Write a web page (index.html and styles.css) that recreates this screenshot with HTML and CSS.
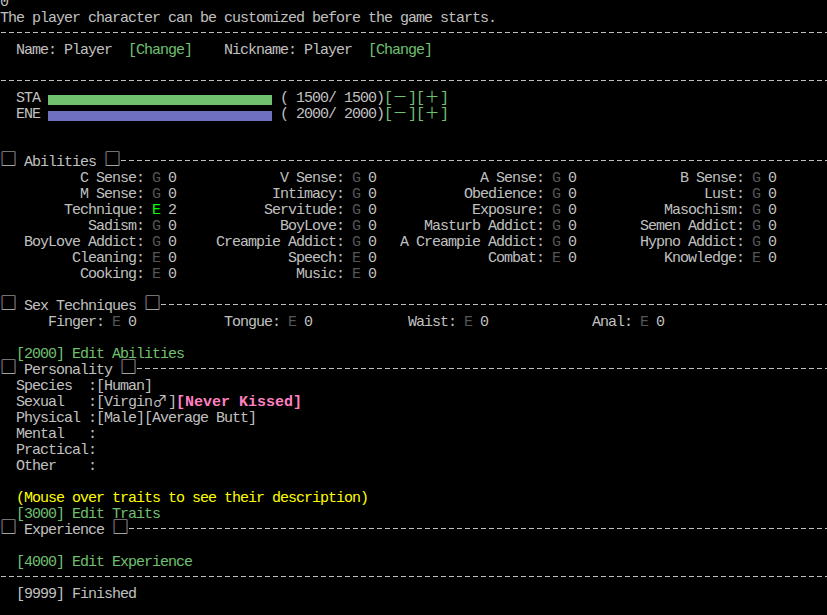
FILE: index.html
```html
<!DOCTYPE html>
<html lang="en">
<head>
    <meta charset="UTF-8">
    <title>Character Setup</title>
    <link rel="stylesheet" href="styles.css">
</head>
<body>
    <div class="console">
        <div class="ln">0</div>
        <div class="ln">The player character can be customized before the game starts.</div>
        <div class="rule"></div>
        <div class="ln">  Name: Player  <span class="link">[Change]</span>    Nickname: Player  <span class="link">[Change]</span></div>
        <div class="ln"></div>
        <div class="rule"></div>
        <div class="ln">  STA <span class="bar sta"></span> ( 1500/ 1500)<span class="link">[<span class="fw">－</span>][<span class="fw">＋</span>]</span></div>
        <div class="ln">  ENE <span class="bar ene"></span> ( 2000/ 2000)<span class="link">[<span class="fw">－</span>][<span class="fw">＋</span>]</span></div>
        <div class="ln"></div>
        <div class="ln"></div>

        <div class="head"><span class="sq">□</span><span> Abilities </span><span class="sq">□</span><span class="fill"></span></div>
        <div class="abil">
            <div class="cell"><span class="lbl">C Sense:</span> <span class="gr">G</span> 0</div>
            <div class="cell"><span class="lbl">V Sense:</span> <span class="gr">G</span> 0</div>
            <div class="cell"><span class="lbl">A Sense:</span> <span class="gr">G</span> 0</div>
            <div class="cell"><span class="lbl">B Sense:</span> <span class="gr">G</span> 0</div>
            <div class="cell"><span class="lbl">M Sense:</span> <span class="gr">G</span> 0</div>
            <div class="cell"><span class="lbl">Intimacy:</span> <span class="gr">G</span> 0</div>
            <div class="cell"><span class="lbl">Obedience:</span> <span class="gr">G</span> 0</div>
            <div class="cell"><span class="lbl">Lust:</span> <span class="gr">G</span> 0</div>
            <div class="cell"><span class="lbl">Technique:</span> <span class="hi">E</span> 2</div>
            <div class="cell"><span class="lbl">Servitude:</span> <span class="gr">G</span> 0</div>
            <div class="cell"><span class="lbl">Exposure:</span> <span class="gr">G</span> 0</div>
            <div class="cell"><span class="lbl">Masochism:</span> <span class="gr">G</span> 0</div>
            <div class="cell"><span class="lbl">Sadism:</span> <span class="gr">G</span> 0</div>
            <div class="cell"><span class="lbl">BoyLove:</span> <span class="gr">G</span> 0</div>
            <div class="cell"><span class="lbl">Masturb Addict:</span> <span class="gr">G</span> 0</div>
            <div class="cell"><span class="lbl">Semen Addict:</span> <span class="gr">G</span> 0</div>
            <div class="cell"><span class="lbl">BoyLove Addict:</span> <span class="gr">G</span> 0</div>
            <div class="cell"><span class="lbl">Creampie Addict:</span> <span class="gr">G</span> 0</div>
            <div class="cell"><span class="lbl">A Creampie Addict:</span> <span class="gr">G</span> 0</div>
            <div class="cell"><span class="lbl">Hypno Addict:</span> <span class="gr">G</span> 0</div>
            <div class="cell"><span class="lbl">Cleaning:</span> <span class="gr">E</span> 0</div>
            <div class="cell"><span class="lbl">Speech:</span> <span class="gr">E</span> 0</div>
            <div class="cell"><span class="lbl">Combat:</span> <span class="gr">E</span> 0</div>
            <div class="cell"><span class="lbl">Knowledge:</span> <span class="gr">E</span> 0</div>
            <div class="cell"><span class="lbl">Cooking:</span> <span class="gr">E</span> 0</div>
            <div class="cell"><span class="lbl">Music:</span> <span class="gr">E</span> 0</div>
        </div>
        <div class="ln"></div>

        <div class="head"><span class="sq">□</span><span> Sex Techniques </span><span class="sq">□</span><span class="fill"></span></div>
        <div class="tech">
            <div class="cell"><span class="lbl">Finger:</span> <span class="gr">E</span> 0</div>
            <div class="cell"><span class="lbl">Tongue:</span> <span class="gr">E</span> 0</div>
            <div class="cell"><span class="lbl">Waist:</span> <span class="gr">E</span> 0</div>
            <div class="cell"><span class="lbl">Anal:</span> <span class="gr">E</span> 0</div>
        </div>
        <div class="ln"></div>
        <div class="ln">  <span class="link">[2000] Edit Abilities</span></div>

        <div class="head"><span class="sq">□</span><span> Personality </span><span class="sq">□</span><span class="fill"></span></div>
        <div class="ln">  Species  :[Human]</div>
        <div class="ln">  Sexual   :[Virgin<span class="fw">♂</span>]<span class="tag">[Never Kissed]</span></div>
        <div class="ln">  Physical :[Male][Average Butt]</div>
        <div class="ln">  Mental   :</div>
        <div class="ln">  Practical:</div>
        <div class="ln">  Other    :</div>
        <div class="ln"></div>
        <div class="ln">  <span class="note">(Mouse over traits to see their description)</span></div>
        <div class="ln">  <span class="link">[3000] Edit Traits</span></div>

        <div class="head"><span class="sq">□</span><span> Experience </span><span class="sq">□</span><span class="fill"></span></div>
        <div class="ln"></div>
        <div class="ln">  <span class="link">[4000] Edit Experience</span></div>
        <div class="rule"></div>
        <div class="ln">  [9999] Finished</div>
    </div>
</body>
</html>
```

FILE: styles.css
```css
body {
    margin: 0;
    background-color: #000;
    overflow: hidden;
}

.console {
    margin-top: -7px;
    font-family: "Liberation Mono", monospace;
    font-size: 15px;
    letter-spacing: -1px;
    color: #c0c0c0;
}

.ln,
.rule,
.head,
.cell {
    height: 16px;
    line-height: 19px;
    white-space: pre;
}

.rule,
.fill {
    background-image: repeating-linear-gradient(90deg, #c0c0c0 0 5px, transparent 5px 8px);
    background-size: 100% 1px;
    background-position: 1px 7px;
    background-repeat: no-repeat;
}

.head {
    display: flex;
}

.fill {
    flex: 1;
}

.sq,
.fw {
    display: inline-block;
    width: 16px;
    text-align: center;
    font-family: "Noto Sans CJK JP", sans-serif;
    letter-spacing: 0;
}

.sq {
    font-size: 17px;
    line-height: 10px;
    vertical-align: -1px;
}

.fw {
    font-size: 15px;
    line-height: 12px;
}

.link {
    color: #70c070;
}

.bar {
    display: inline-block;
    vertical-align: top;
    width: 224px;
    height: 10px;
    margin-top: 6px;
}

.sta {
    background-color: #70c070;
}

.ene {
    background-color: #7070c0;
}

.abil {
    display: grid;
    grid-template-columns: repeat(4, 200px);
}

.abil .lbl {
    width: 144px;
}

.tech {
    display: grid;
    grid-template-columns: repeat(4, 176px);
}

.tech .lbl {
    width: 104px;
}

.lbl {
    display: inline-block;
    text-align: right;
}

.gr {
    color: #555;
}

.hi {
    color: #00ff00;
}

.tag {
    color: #ff80c0;
    font-weight: bold;
    letter-spacing: 0;
}

.note {
    color: #ffff00;
}
```
